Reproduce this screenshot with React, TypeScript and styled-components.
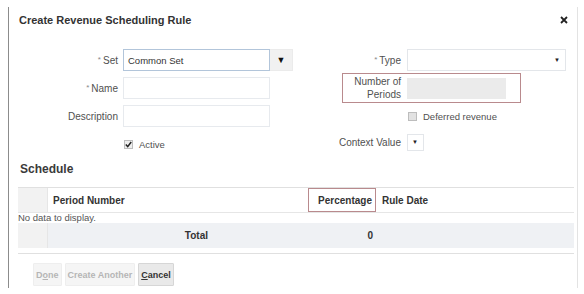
import React from 'react';
import styled, { createGlobalStyle } from 'styled-components';

const GlobalStyle = createGlobalStyle`
    body {
        margin: 0;
        background: #ffffff;
        font-family: "Liberation Sans", Arial, sans-serif;
        color: #333333;
    }
`;

const Dialog = styled.div`
    margin: 7px 0 0 8px;
    width: 570px;
    height: 281px;
    border-left: 1px solid #8c8c8c;
    border-right: 1px solid #e3e3e3;
    padding-left: 9px;
    box-sizing: border-box;
`;

const Header = styled.div`
    height: 26px;
    display: flex;
    align-items: center;
    justify-content: space-between;
    padding-right: 9px;
`;

const Title = styled.div`
    font-size: 11px;
    font-weight: bold;
    color: #333333;
    padding-left: 1px;
`;

const Form = styled.div`
    margin-top: 16px;
    display: grid;
    grid-template-columns: 282px 1fr;
`;

const Column = styled.div`
    display: flex;
    flex-direction: column;
`;

const Row = styled.div<{ $top?: number; $height?: number }>`
    display: flex;
    align-items: center;
    height: ${p => p.$height ?? 22}px;
    margin-top: ${p => p.$top ?? 0}px;
`;

const Label = styled.div<{ $width: number; $gap: number }>`
    width: ${p => p.$width}px;
    margin-right: ${p => p.$gap}px;
    text-align: right;
    font-size: 10px;
    line-height: 13px;
    color: #505050;
    flex-shrink: 0;
`;

const Star = styled.span`
    font-size: 8px;
    color: #888888;
    vertical-align: 2px;
    margin-right: 2px;
`;

const TextInput = styled.div<{ $width: number; $focused?: boolean }>`
    width: ${p => p.$width}px;
    height: 22px;
    box-sizing: border-box;
    border: 1px solid ${p => (p.$focused ? '#b2c5da' : '#e7eaee')};
    background: #ffffff;
    font-size: 9.5px;
    color: #333333;
    display: flex;
    align-items: center;
    padding-left: 4px;
`;

const DropButton = styled.div`
    width: 23px;
    height: 22px;
    box-sizing: border-box;
    background: #f1f1f1;
    border: 1px solid #ebebeb;
    border-left: none;
    display: flex;
    align-items: center;
    justify-content: center;
    font-size: 9px;
    color: #111111;
`;

const Select = styled.div<{ $width: number; $height: number }>`
    width: ${p => p.$width}px;
    height: ${p => p.$height}px;
    box-sizing: border-box;
    border: 1px solid #e3e6ea;
    background: #ffffff;
    display: flex;
    align-items: center;
    justify-content: flex-end;
    padding-right: 5px;
    font-size: 6px;
    color: #222222;
`;

const CheckRow = styled.label<{ $indent: number }>`
    display: flex;
    align-items: center;
    padding-left: ${p => p.$indent}px;
    font-size: 9.5px;
    color: #505050;
    gap: 6px;
`;

const Box = styled.span<{ $checked?: boolean }>`
    width: 9px;
    height: 9px;
    box-sizing: border-box;
    border: 1px solid #bdbdbd;
    background: ${p => (p.$checked ? '#eeeeee' : '#e2e2e2')};
    display: flex;
    align-items: center;
    justify-content: center;
`;

const Highlight = styled.div`
    margin-left: 42px;
    margin-top: 2px;
    width: 179px;
    height: 30px;
    box-sizing: border-box;
    border: 1px solid #b98a8d;
    display: flex;
    align-items: center;
`;

const ReadOnly = styled.div`
    width: 99px;
    height: 21px;
    background: #ebebeb;
`;

const Schedule = styled.div`
    margin-top: 6px;
    font-size: 12px;
    line-height: 16px;
    font-weight: bold;
    color: #3a3a3a;
    padding-left: 2px;
`;

const Table = styled.div`
    margin-top: 10px;
    width: 556px;
    border-top: 1px solid #e0e0e0;
    border-bottom: 1px solid #e0e0e0;
    padding-bottom: 5px;
`;

const TableRow = styled.div<{ $height: number; $bg?: string; $line?: boolean }>`
    display: grid;
    grid-template-columns: 30px 260px 68px 1fr;
    height: ${p => p.$height}px;
    background: ${p => p.$bg ?? 'transparent'};
    border-bottom: ${p => (p.$line ? '1px solid #e6e6e6' : 'none')};
`;

const Stub = styled.div`
    background: #f2f2f2;
    border-right: 1px solid #e6e6e6;
`;

const Cell = styled.div<{ $align?: string; $pad?: string; $boxed?: boolean }>`
    display: flex;
    align-items: center;
    justify-content: ${p => p.$align ?? 'flex-start'};
    padding: ${p => p.$pad ?? '0 0 0 5px'};
    font-size: 10px;
    font-weight: bold;
    color: #333333;
    box-sizing: border-box;
    border: ${p => (p.$boxed ? '1px solid #b98a8d' : 'none')};
`;

const Empty = styled.div`
    height: 10px;
    font-size: 9.5px;
    line-height: 10px;
    color: #555555;
`;

const Buttons = styled.div`
    margin-top: 9px;
    padding-left: 15px;
    display: flex;
    gap: 3px;
`;

const Button = styled.div<{ $disabled?: boolean }>`
    height: 23px;
    padding: 0 2px;
    display: flex;
    align-items: center;
    box-sizing: border-box;
    font-size: 9px;
    font-weight: bold;
    color: ${p => (p.$disabled ? '#b5b5b5' : '#333333')};
    background: ${p => (p.$disabled ? '#f5f5f5' : '#e9e9e9')};
    border: 1px solid ${p => (p.$disabled ? '#eeeeee' : '#d6d6d6')};
    border-radius: 1px;
`;

const Check = () => (
    <svg width="7" height="7" viewBox="0 0 7 7">
        <polyline points="0.8,3.6 2.7,5.6 6.2,1" fill="none" stroke="#222" strokeWidth="1.5" />
    </svg>
);

const Close = () => (
    <svg width="8" height="8" viewBox="0 0 8 8">
        <path d="M1 1 L7 7 M7 1 L1 7" stroke="#222" strokeWidth="1.8" />
    </svg>
);

const App: React.FC = () => {
    return (
        <Dialog>
            <GlobalStyle />
            <Header>
                <Title>Create Revenue Scheduling Rule</Title>
                <Close />
            </Header>
            <Form>
                <Column>
                    <Row>
                        <Label $width={100} $gap={5}><Star>*</Star>Set</Label>
                        <TextInput $width={147} $focused>Common Set</TextInput>
                        <DropButton>▼</DropButton>
                    </Row>
                    <Row $top={6}>
                        <Label $width={100} $gap={5}><Star>*</Star>Name</Label>
                        <TextInput $width={147} />
                    </Row>
                    <Row $top={6}>
                        <Label $width={100} $gap={5}>Description</Label>
                        <TextInput $width={147} />
                    </Row>
                    <Row $top={6}>
                        <CheckRow $indent={106}>
                            <Box $checked><Check /></Box>
                            Active
                        </CheckRow>
                    </Row>
                </Column>
                <Column>
                    <Row>
                        <Label $width={101} $gap={6}><Star>*</Star>Type</Label>
                        <Select $width={159} $height={22}>▼</Select>
                    </Row>
                    <Highlight>
                        <Label $width={58} $gap={6}>Number of<br />Periods</Label>
                        <ReadOnly />
                    </Highlight>
                    <Row $top={2}>
                        <CheckRow $indent={108}>
                            <Box />
                            Deferred revenue
                        </CheckRow>
                    </Row>
                    <Row $top={4}>
                        <Label $width={101} $gap={6}>Context Value</Label>
                        <Select $width={17} $height={17}>▼</Select>
                    </Row>
                </Column>
            </Form>
            <Schedule>Schedule</Schedule>
            <Table>
                <TableRow $height={24} $line>
                    <Stub />
                    <Cell>Period Number</Cell>
                    <Cell $align="flex-end" $pad="0 3px 0 0" $boxed>Percentage</Cell>
                    <Cell $pad="0 0 0 6px">Rule Date</Cell>
                </TableRow>
                <Empty>No data to display.</Empty>
                <TableRow $height={25} $bg="#eff1f4">
                    <Stub />
                    <Cell $align="flex-end" $pad="0 100px 0 0">Total</Cell>
                    <Cell $align="flex-end" $pad="0 3px 0 0">0</Cell>
                    <Cell />
                </TableRow>
            </Table>
            <Buttons>
                <Button $disabled>D<u>o</u>ne</Button>
                <Button $disabled>Create Another</Button>
                <Button><u>C</u>ancel</Button>
            </Buttons>
        </Dialog>
    );
};

export default App;
